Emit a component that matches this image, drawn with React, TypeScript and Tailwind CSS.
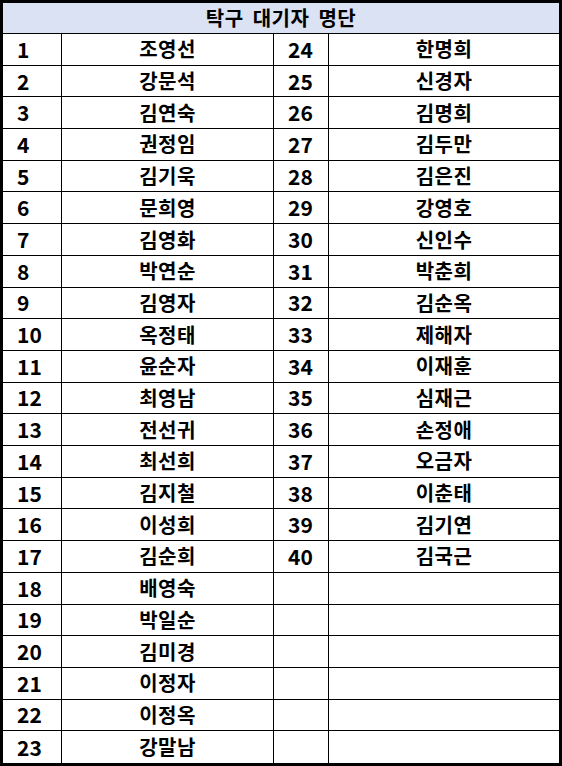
const left = [
  "조영선", "강문석", "김연숙", "권정임", "김기욱", "문희영", "김영화", "박연순",
  "김영자", "옥정태", "윤순자", "최영남", "전선귀", "최선희", "김지철", "이성희",
  "김순희", "배영숙", "박일순", "김미경", "이정자", "이정옥", "강말남",
];

const right = [
  "한명희", "신경자", "김명희", "김두만", "김은진", "강영호", "신인수", "박춘희",
  "김순옥", "제해자", "이재훈", "심재근", "손정애", "오금자", "이춘태", "김기연",
  "김국근",
];

export default function App() {
  return (
    <div
      className="w-[562px] h-[766px] bg-white border-[3px] border-black flex flex-col text-black font-bold"
      style={{ fontFamily: '"Noto Sans CJK KR", "Noto Sans", sans-serif' }}
    >
      <div className="h-[31px] shrink-0 bg-[#dae2f4] border-b border-black flex items-center justify-center text-[20px] leading-none tracking-[0.5px] [word-spacing:4px]">
        탁구 대기자 명단
      </div>
      <div className="flex-1 grid grid-cols-[59px_212px_55px_1fr] grid-rows-[repeat(23,minmax(0,1fr))]">
        {left.map((name, i) => {
          const last = i === left.length - 1;
          const rb = last ? "" : "border-b";
          const r = right[i];
          return [
            <div key={`a${i}`} className={`${rb} border-r border-black flex items-center pl-[14px] text-[21px] leading-none`}>
              {i + 1}
            </div>,
            <div key={`b${i}`} className={`${rb} border-r border-black flex items-center justify-center text-[20px] leading-none tracking-[0.5px]`}>
              {name}
            </div>,
            <div key={`c${i}`} className={`${rb} border-r border-black flex items-center pl-[14px] text-[21px] leading-none`}>
              {r ? i + 24 : ""}
            </div>,
            <div key={`d${i}`} className={`${rb} border-black flex items-center justify-center text-[20px] leading-none tracking-[0.5px]`}>
              {r ?? ""}
            </div>,
          ];
        })}
      </div>
    </div>
  );
}
